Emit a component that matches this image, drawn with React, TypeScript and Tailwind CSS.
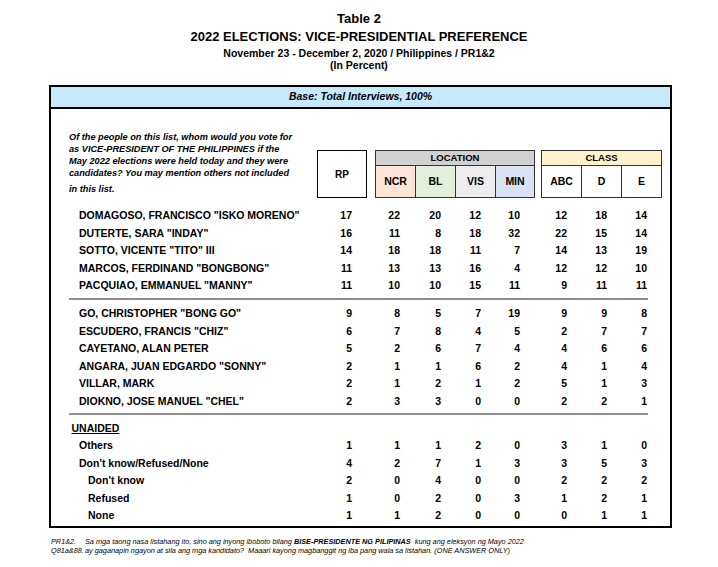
type Row = { name: string; v: number[]; indent?: number };

const top5: Row[] = [
  { name: 'DOMAGOSO, FRANCISCO "ISKO MORENO"', v: [17, 22, 20, 12, 10, 12, 18, 14] },
  { name: 'DUTERTE, SARA "INDAY"', v: [16, 11, 8, 18, 32, 22, 15, 14] },
  { name: 'SOTTO, VICENTE "TITO" III', v: [14, 18, 18, 11, 7, 14, 13, 19] },
  { name: 'MARCOS, FERDINAND "BONGBONG"', v: [11, 13, 13, 16, 4, 12, 12, 10] },
  { name: 'PACQUIAO, EMMANUEL "MANNY"', v: [11, 10, 10, 15, 11, 9, 11, 11] },
];

const others: Row[] = [
  { name: 'GO, CHRISTOPHER "BONG GO"', v: [9, 8, 5, 7, 19, 9, 9, 8] },
  { name: 'ESCUDERO, FRANCIS "CHIZ"', v: [6, 7, 8, 4, 5, 2, 7, 7] },
  { name: 'CAYETANO, ALAN PETER', v: [5, 2, 6, 7, 4, 4, 6, 6] },
  { name: 'ANGARA, JUAN EDGARDO "SONNY"', v: [2, 1, 1, 6, 2, 4, 1, 4] },
  { name: 'VILLAR, MARK', v: [2, 1, 2, 1, 2, 5, 1, 3] },
  { name: 'DIOKNO, JOSE MANUEL "CHEL"', v: [2, 3, 3, 0, 0, 2, 2, 1] },
];

const unaided: Row[] = [
  { name: 'Others', v: [1, 1, 1, 2, 0, 3, 1, 0] },
  { name: "Don't know/Refused/None", v: [4, 2, 7, 1, 3, 3, 5, 3] },
  { name: "Don't know", v: [2, 0, 4, 0, 0, 2, 2, 2], indent: 1 },
  { name: 'Refused', v: [1, 0, 2, 0, 3, 1, 2, 1], indent: 1 },
  { name: 'None', v: [1, 1, 2, 0, 0, 0, 1, 1], indent: 1 },
];

function DataRow({ row }: { row: Row }) {
  const [rp, ncr, bl, vis, min, abc, d, e] = row.v;
  return (
    <div className="flex h-[17.5px] items-center text-[10.5px] font-bold leading-none">
      <div className={`w-[266px] ${row.indent ? 'pl-[37px]' : 'pl-[28px]'}`}>{row.name}</div>
      <div className="w-[50px] pr-[15px] text-right">{rp}</div>
      <div className="ml-[8px] w-[40px] pr-[15px] text-right">{ncr}</div>
      <div className="w-[40px] pr-[14px] text-right">{bl}</div>
      <div className="w-[40px] pr-[14px] text-right">{vis}</div>
      <div className="w-[40px] pr-[15px] text-right">{min}</div>
      <div className="ml-[6px] w-[40px] pr-[14px] text-right">{abc}</div>
      <div className="w-[40px] pr-[14px] text-right">{d}</div>
      <div className="w-[40px] pr-[14px] text-right">{e}</div>
    </div>
  );
}

function Separator() {
  return <div className="ml-[18px] h-[2px] w-[579px] bg-[#8f8f8f]" />;
}

export default function App() {
  return (
    <div className="h-[567px] w-[718px] bg-white font-['Liberation_Sans',Arial,sans-serif] text-black">
      {/* Title */}
      <div className="flex flex-col items-center whitespace-nowrap pt-[10px] font-bold">
        <div className="h-[18px] text-[13px] leading-[18px]">Table 2</div>
        <div className="h-[17px] text-[13px] leading-[17px]">2022 ELECTIONS: VICE-PRESIDENTIAL PREFERENCE</div>
        <div className="mt-[2px] h-[12px] text-[10.5px] leading-[12px]">
          November 23 - December 2, 2020 / Philippines / PR1&amp;2
        </div>
        <div className="h-[13px] text-[10.5px] leading-[13px]">(In Percent)</div>
      </div>

      {/* Table box */}
      <div className="ml-[49px] mt-[13px] w-[623px] border-2 border-black">
        <div className="flex h-[22px] items-center justify-center border-b-2 border-black bg-[#c6e9fc] text-[10.5px] font-bold italic">
          Base: Total Interviews, 100%
        </div>

        {/* Header */}
        <div className="flex items-start">
          <div className="w-[266px] whitespace-nowrap pl-[18px] pt-[21.5px] text-[9.2px] font-bold italic leading-[12.1px]">
            Of the people on this list, whom would you vote for
            <br />
            as VICE-PRESIDENT OF THE PHILIPPINES if the
            <br />
            May 2022 elections were held today and they were
            <br />
            candidates? You may mention others not included
            <div className="mt-[4px]">in this list.</div>
          </div>
          <div className="mt-[41px] flex text-[10.5px] font-bold">
            <div className="flex h-[48px] w-[50px] items-center justify-center border border-black text-[10px]">RP</div>
            <div className="ml-[8px] flex w-[160px] flex-col border border-[#333]">
              <div className="flex h-[15px] items-center justify-center border-b border-[#333] bg-[#d0d0d0] text-[9.5px]">
                LOCATION
              </div>
              <div className="flex h-[31px]">
                <div className="flex w-[40px] items-center justify-center border-r border-[#333] bg-[#fce4d6]">NCR</div>
                <div className="flex w-[40px] items-center justify-center border-r border-[#333] bg-[#e2efda]">BL</div>
                <div className="flex w-[40px] items-center justify-center border-r border-[#333] bg-[#ededed]">VIS</div>
                <div className="flex flex-1 items-center justify-center bg-[#d9e1f2]">MIN</div>
              </div>
            </div>
            <div className="ml-[6px] flex w-[121px] flex-col border border-[#333]">
              <div className="flex h-[15px] items-center justify-center border-b border-[#333] bg-[#fff2cc] text-[9.5px]">
                CLASS
              </div>
              <div className="flex h-[31px]">
                <div className="flex w-[40px] items-center justify-center border-r border-[#333]">ABC</div>
                <div className="flex w-[40px] items-center justify-center border-r border-[#333]">D</div>
                <div className="flex flex-1 items-center justify-center">E</div>
              </div>
            </div>
          </div>
        </div>

        {/* Body */}
        <div className="mt-[8.75px]">
          {top5.map((r) => (
            <DataRow key={r.name} row={r} />
          ))}
        </div>
        <div className="mt-[3.75px]">
          <Separator />
        </div>
        <div className="mt-[4.75px]">
          {others.map((r) => (
            <DataRow key={r.name} row={r} />
          ))}
        </div>
        <div className="mt-[3.25px]">
          <Separator />
        </div>
        <div className="mt-[4.25px] pb-[1.75px]">
          <div className="flex h-[17.5px] items-center pl-[20.5px] text-[10.5px] font-bold leading-none underline">
            UNAIDED
          </div>
          {unaided.map((r) => (
            <DataRow key={r.name} row={r} />
          ))}
        </div>
      </div>

      {/* Footnote */}
      <div className="ml-[51px] mt-[9px] whitespace-nowrap text-[7.3px] italic leading-[9px]">
        <div className="flex">
          <span className="w-[34px]">PR1&amp;2.</span>
          <span>
            Sa mga taong nasa listahang ito, sino ang inyong iboboto bilang{' '}
            <span className="font-bold">BISE-PRESIDENTE NG PILIPINAS</span> &nbsp;kung ang eleksyon ng Mayo 2022
          </span>
        </div>
        <div className="flex">
          <span className="w-[34px]">Q81a&amp;88.</span>
          <span>
            ay gaganapin ngayon at sila ang mga kandidato? &nbsp;Maaari kayong magbanggit ng iba pang wala sa listahan. (ONE ANSWER ONLY)
          </span>
        </div>
      </div>
    </div>
  );
}
